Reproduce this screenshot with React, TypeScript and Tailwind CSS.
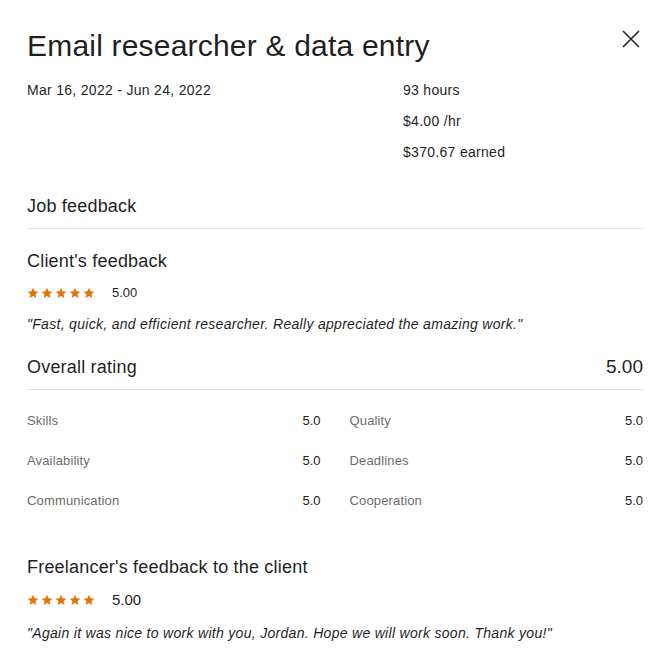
import React from "react";

const Stars = () => (
  <div className="flex gap-[2px]">
    {[0, 1, 2, 3, 4].map((i) => (
      <svg key={i} width="12" height="12" viewBox="0 0 24 24" fill="#e3740a">
        <path d="M12 1.5l3.1 7.1 7.7.7-5.8 5.1 1.7 7.6L12 18l-6.7 4 1.7-7.6-5.8-5.1 7.7-.7z" />
      </svg>
    ))}
  </div>
);

const Metric = ({ label, value }: { label: string; value: string }) => (
  <div className="flex justify-between h-[40px] items-center">
    <span className="text-[13px] tracking-[0.15px] text-[#6b6b6b]">{label}</span>
    <span className="text-[13px] text-[#222]">{value}</span>
  </div>
);

export default function App() {
  return (
    <div
      className="w-[671px] h-[661px] bg-white text-[#1f1f1f] pl-[27px] pr-[28px] pt-[27px] overflow-hidden"
      style={{ fontFamily: '"Liberation Sans", Arial, sans-serif' }}
    >
      <div className="flex justify-between items-start">
        <h1 className="text-[30px] leading-[38px] tracking-[0.2px]">Email researcher &amp; data entry</h1>
        <button className="mt-[2px] mr-[2px] text-[#222]">
          <svg width="20" height="20" viewBox="0 0 20 20" stroke="currentColor" strokeWidth="1.6" fill="none">
            <path d="M2 2L18 18M18 2L2 18" />
          </svg>
        </button>
      </div>

      <div className="flex mt-[15px] text-[14px] tracking-[0.3px]">
        <div className="w-[376px] leading-[20px]">Mar 16, 2022 - Jun 24, 2022</div>
        <div className="flex flex-col gap-[11px] leading-[20px]">
          <div>93 hours</div>
          <div>$4.00 /hr</div>
          <div>$370.67 earned</div>
        </div>
      </div>

      <div className="mt-[32px] text-[18px] tracking-[0.2px] leading-[24px] pb-[10px] border-b border-[#e4e4e4]">Job feedback</div>

      <div className="mt-[20px] text-[18px] tracking-[0.2px] leading-[24px]">Client's feedback</div>
      <div className="flex items-center mt-[12px] h-[16px]">
        <Stars />
        <span className="ml-[17px] text-[13px]">5.00</span>
      </div>
      <div className="mt-[13px] text-[14px] tracking-[0.3px] italic leading-[20px]">
        "Fast, quick, and efficient researcher. Really appreciated the amazing work."
      </div>

      <div className="flex justify-between items-center mt-[21px] pb-[10px] border-b border-[#e4e4e4]">
        <span className="text-[18px] tracking-[0.2px] leading-[24px]">Overall rating</span>
        <span className="text-[19px] leading-[24px]">5.00</span>
      </div>

      <div className="grid grid-cols-2 gap-x-[29px] mt-[11px]">
        <Metric label="Skills" value="5.0" />
        <Metric label="Quality" value="5.0" />
        <Metric label="Availability" value="5.0" />
        <Metric label="Deadlines" value="5.0" />
        <Metric label="Communication" value="5.0" />
        <Metric label="Cooperation" value="5.0" />
      </div>

      <div className="mt-[34px] text-[18px] tracking-[0.2px] leading-[24px]">Freelancer's feedback to the client</div>
      <div className="flex items-center mt-[13px] h-[16px]">
        <Stars />
        <span className="ml-[17px] text-[15px]">5.00</span>
      </div>
      <div className="mt-[15px] text-[14px] tracking-[0.3px] italic leading-[20px]">
        "Again it was nice to work with you, Jordan. Hope we will work soon. Thank you!"
      </div>
    </div>
  );
}
